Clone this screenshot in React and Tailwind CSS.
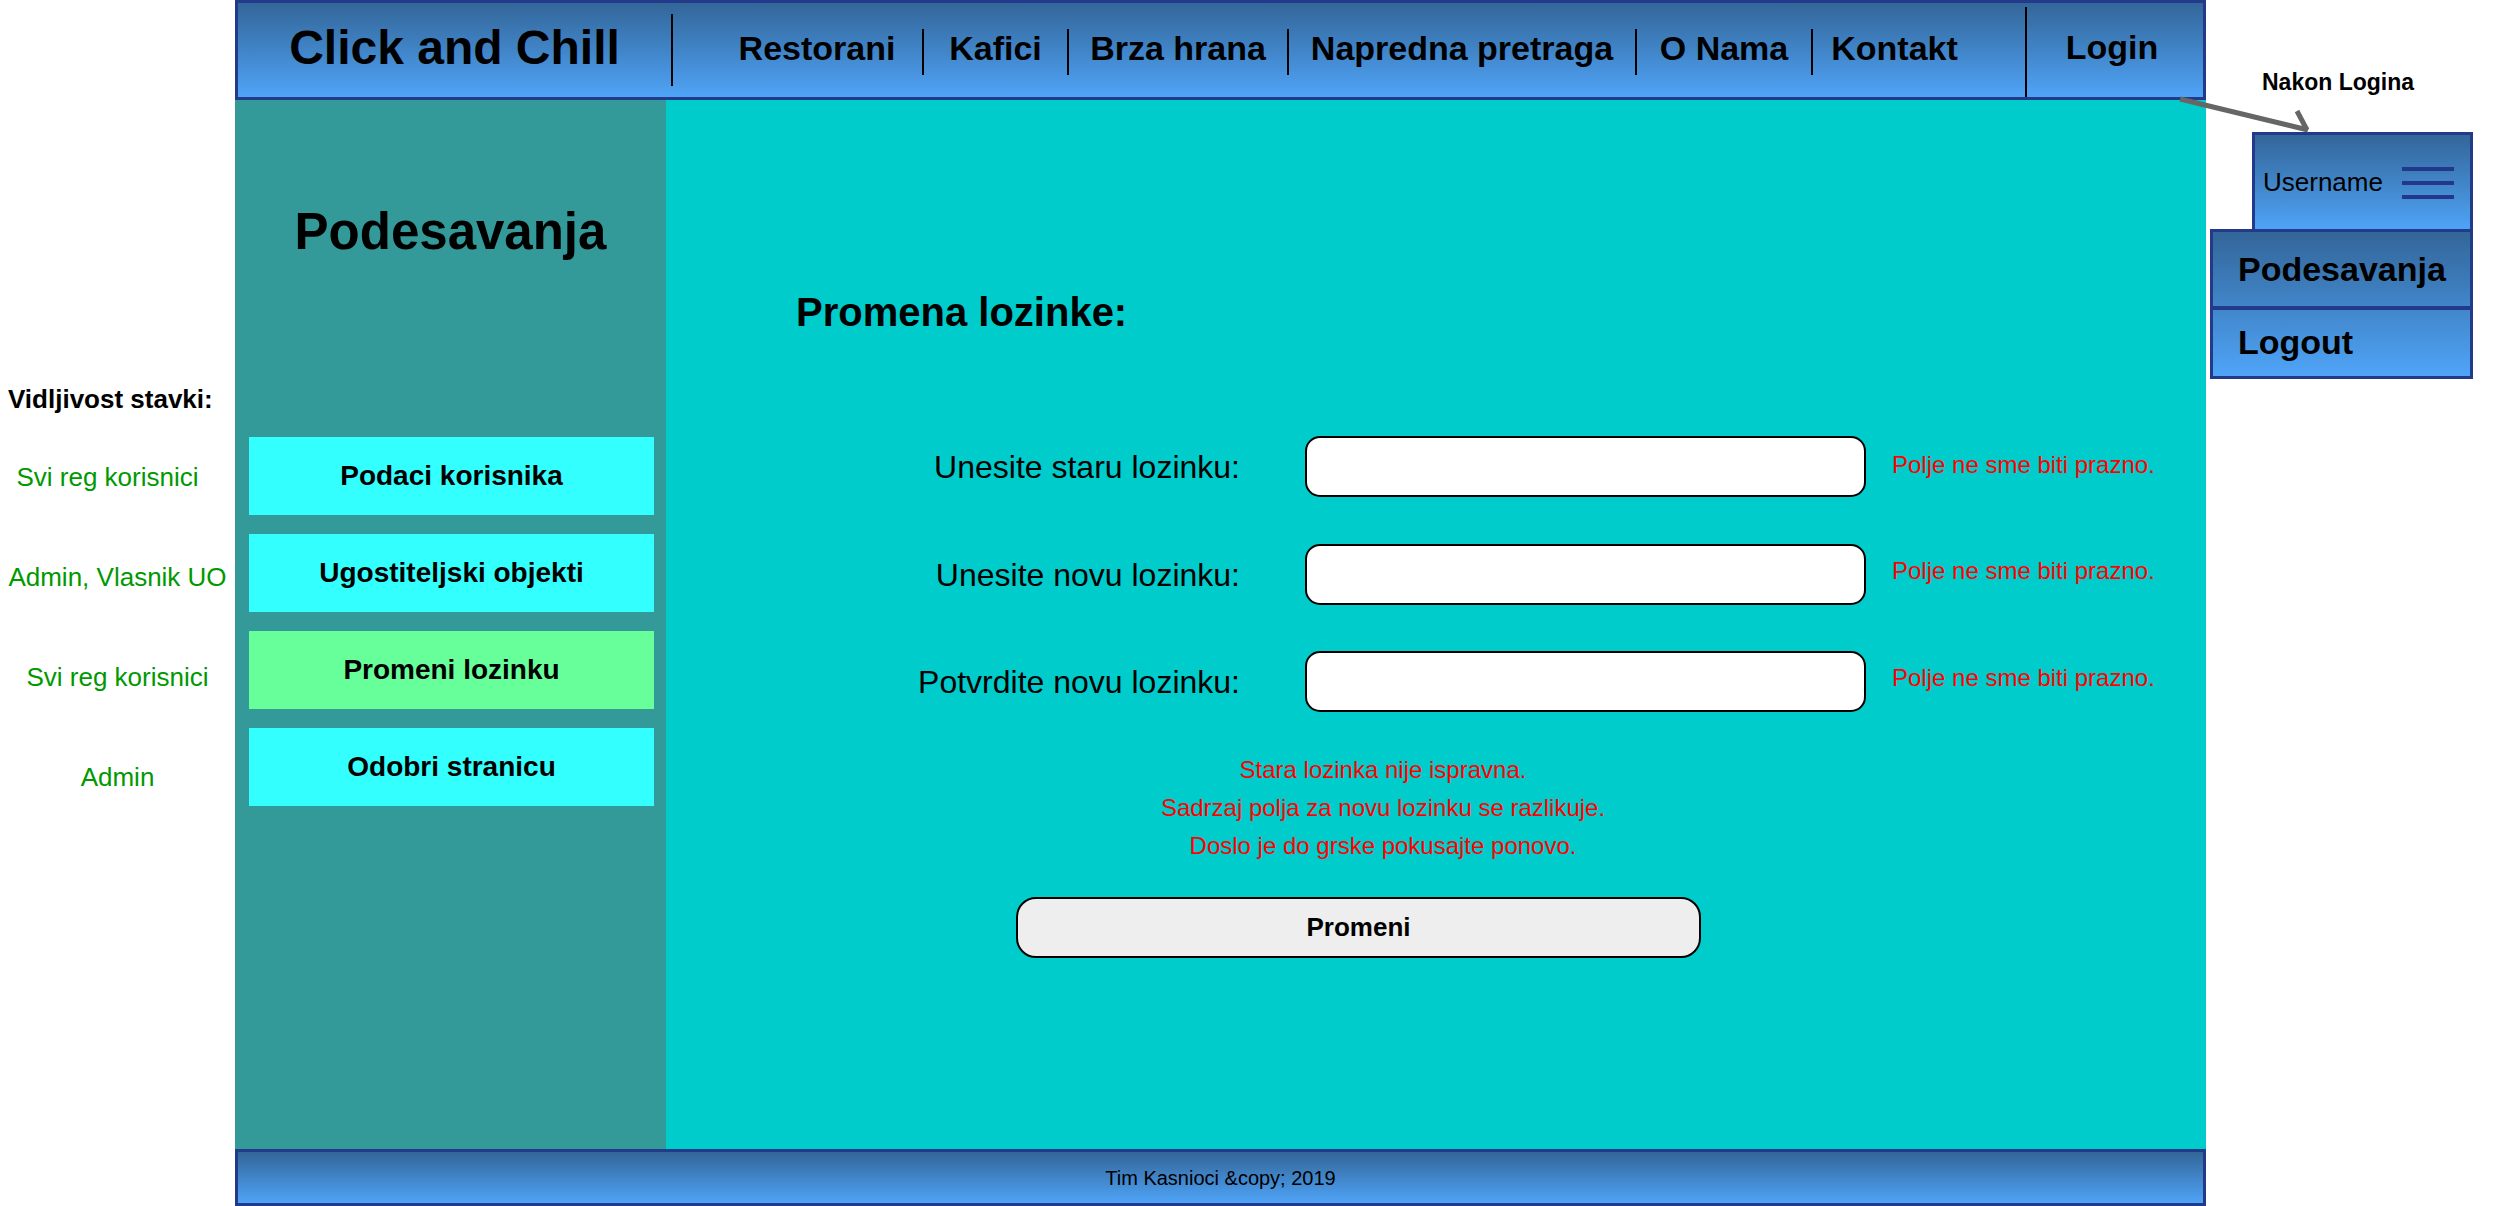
import React from "react";

const grad = "bg-linear-to-b from-[#336699] to-[#4fa4f8]";

function NavItem({ w, children, sep = true }) {
  return (
    <>
      <div className={`${w} flex items-center justify-center -mt-[3px] text-[34px] font-bold text-black`}>{children}</div>
      {sep && <div className="w-[2px] h-[46px] bg-black mt-[4px]" />}
    </>
  );
}

function SideBtn({ active, children }) {
  return (
    <div
      className={`h-[78px] w-[405px] flex items-center justify-center text-[28px] font-bold text-black ${
        active ? "bg-[#66ff99]" : "bg-[#33ffff]"
      }`}
    >
      {children}
    </div>
  );
}

function Row({ label, mt, errOffset }) {
  return (
    <div className={`flex items-center h-[61px] ${mt}`}>
      <div className="w-[444px] text-right text-[32px] text-black">{label}</div>
      <div className="ml-[65px] w-[561px] h-[61px] rounded-[15px] border-2 border-black bg-white" />
      <div className={`ml-[26px] text-[24px] text-[#ff0000] ${errOffset}`}>Polje ne sme biti prazno.</div>
    </div>
  );
}

export default function App() {
  return (
    <div className="relative w-[2502px] h-[1206px] bg-white flex font-['Liberation_Sans',Arial,sans-serif] overflow-hidden">
      {/* left annotation column */}
      <div className="w-[235px] flex flex-col">
        <div className="mt-[379px] h-[40px] flex items-center pl-[8px] text-[26px] font-bold text-black whitespace-nowrap">
          Vidljivost stavki:
        </div>
        <div className="mt-[8px] flex flex-col text-[26px] text-[#009900]">
          <div className="h-[100px] flex items-center justify-center pr-[20px]">Svi reg korisnici</div>
          <div className="h-[100px] flex items-center justify-center whitespace-nowrap">Admin, Vlasnik UO</div>
          <div className="h-[100px] flex items-center justify-center">Svi reg korisnici</div>
          <div className="h-[100px] flex items-center justify-center">Admin</div>
        </div>
      </div>

      {/* page */}
      <div className="w-[1971px] h-full flex flex-col">
        <header className={`h-[100px] border-[3px] border-[#213a89] ${grad} flex items-center`}>
          <div className="w-[433px] flex items-center justify-center pb-[4px] text-[48px] font-bold text-black">
            Click and Chill
          </div>
          <div className="w-[2px] h-[72px] bg-black" />
          <div className="pl-[39px] flex items-center h-full">
            <NavItem w="w-[210px]">Restorani</NavItem>
            <NavItem w="w-[143px]">Kafici</NavItem>
            <NavItem w="w-[218px]">Brza hrana</NavItem>
            <NavItem w="w-[346px]">Napredna pretraga</NavItem>
            <NavItem w="w-[174px]">O Nama</NavItem>
            <NavItem w="w-[163px]" sep={false}>Kontakt</NavItem>
          </div>
          <div className="flex-1" />
          <div className="w-[2px] self-stretch bg-black mt-[4px]" />
          <div className="w-[176px] flex items-center justify-center pb-[5px] pr-[6px] text-[34px] font-bold text-black">
            Login
          </div>
        </header>

        <div className="flex-1 flex">
          <aside className="w-[431px] bg-[#339999] flex flex-col">
            <div className="mt-[92px] h-[80px] flex items-center justify-center text-[51px] font-bold text-black">
              Podesavanja
            </div>
            <div className="mt-[165px] pl-[14px] flex flex-col gap-[19px]">
              <SideBtn>Podaci korisnika</SideBtn>
              <SideBtn>Ugostiteljski objekti</SideBtn>
              <SideBtn active>Promeni lozinku</SideBtn>
              <SideBtn>Odobri stranicu</SideBtn>
            </div>
          </aside>

          <main className="flex-1 bg-[#00cccc] pl-[130px] flex flex-col">
            <div className="mt-[187px] h-[50px] flex items-center text-[40px] font-bold text-black">
              Promena lozinke:
            </div>
            <Row mt="mt-[99px]" errOffset="-mt-[3px]" label="Unesite staru lozinku:" />
            <Row mt="mt-[47px]" errOffset="-mt-[8px]" label="Unesite novu lozinku:" />
            <Row mt="mt-[46px]" errOffset="-mt-[7px]" label="Potvrdite novu lozinku:" />
            <div className="mt-[39px] w-[1174px] text-center text-[24px] leading-[38px] text-[#ff0000]">
              <div>Stara lozinka nije ispravna.</div>
              <div>Sadrzaj polja za novu lozinku se razlikuje.</div>
              <div>Doslo je do grske pokusajte ponovo.</div>
            </div>
            <div className="mt-[32px] ml-[220px] w-[685px] h-[61px] rounded-[20px] border-2 border-black bg-[#eeeeee] flex items-center justify-center text-[26px] font-bold text-black">
              Promeni
            </div>
          </main>
        </div>

        <footer className={`h-[57px] border-[3px] border-[#213a89] ${grad} flex items-center justify-center text-[20px] text-black`}>
          Tim Kasnioci &amp;copy; 2019
        </footer>
      </div>

      {/* right annotation column */}
      <div className="w-[296px] flex flex-col">
        <div className="mt-[66px] h-[32px] pl-[56px] flex items-center text-[23px] font-bold text-black whitespace-nowrap">
          Nakon Logina
        </div>
        <div className={`mt-[34px] ml-[46px] w-[221px] h-[101px] border-[3px] border-[#213a89] ${grad} flex items-center`}>
          <span className="pl-[8px] text-[26px] text-black">Username</span>
          <div className="ml-auto mr-[16px] flex flex-col gap-[10px]">
            <div className="w-[52px] h-[4px] bg-[#23388a]" />
            <div className="w-[52px] h-[4px] bg-[#23388a]" />
            <div className="w-[52px] h-[4px] bg-[#23388a]" />
          </div>
        </div>
        <div className={`-mt-[4px] ml-[4px] w-[263px] border-[3px] border-[#213a89] ${grad} flex flex-col`}>
          <div className="h-[74px] flex items-center pl-[25px] text-[34px] font-bold text-black">Podesavanja</div>
          <div className="h-[4px] bg-[#213a89]" />
          <div className="h-[66px] flex items-center pl-[25px] pb-[2px] text-[34px] font-bold text-black">Logout</div>
        </div>
      </div>

      {/* connector arrow */}
      <svg className="absolute left-[2170px] top-[90px]" width="150" height="50" viewBox="0 0 150 50">
        <line x1="10" y1="9" x2="138" y2="40" stroke="#666666" strokeWidth="5" />
        <line x1="127" y1="21" x2="137" y2="40" stroke="#666666" strokeWidth="5" />
      </svg>
    </div>
  );
}
